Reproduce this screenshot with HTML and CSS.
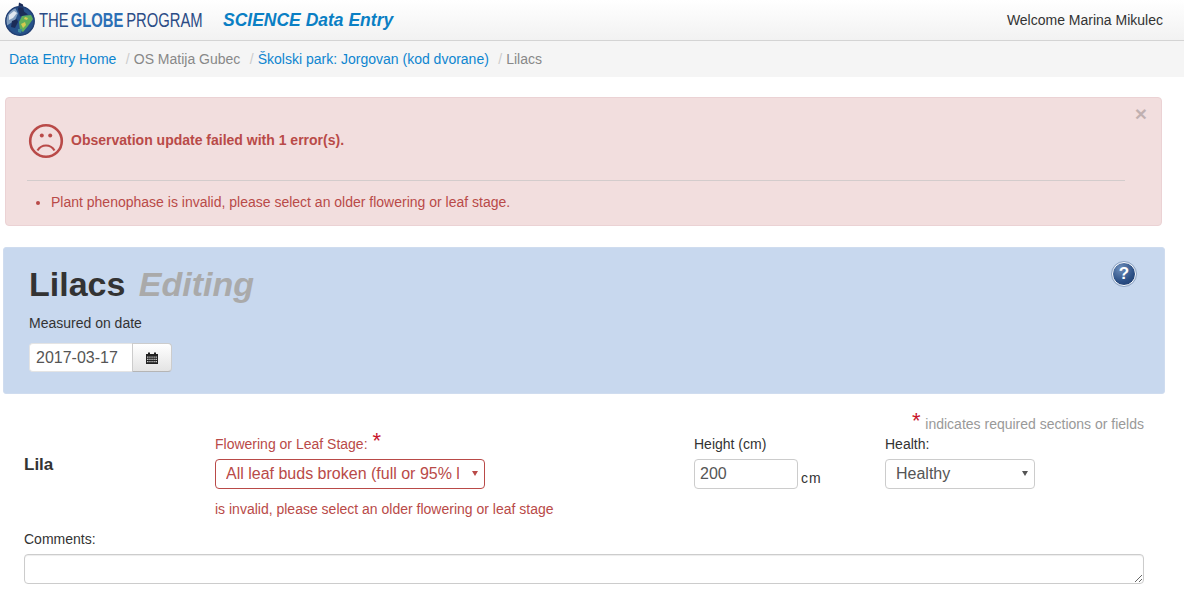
FILE: index.html
```html
<!DOCTYPE html>
<html lang="en">
<head>
<meta charset="utf-8">
<title>Lilacs Editing</title>
<link rel="stylesheet" href="styles.css">
</head>
<body>
<div class="page">
  <header class="topbar">
    <div class="brand">
      <svg class="globe" width="34" height="34" viewBox="0 0 34 34" aria-hidden="true">
        <circle cx="16" cy="19" r="14.500" fill="#26518a"/>
        <path d="M2 19A14.500 14.500 0 0 1 11 5.500l3 6-3 7-5 3-3 2z" fill="#7f9cbd"/>
        <path d="M15 0.500l4 2 1 7 4 3-8 2-2-7z" fill="#1b2c58"/>
        <path d="M5 13l5-4 3 2-4 5-4 2z" fill="#dfe7f0"/>
        <path d="M8 19l5-2 1 3-3 6-4-1z" fill="#1b2c58"/>
        <path d="M18 14l9-1 2 4-5 7-5 6-3-2-1-8z" fill="#5fae5b"/>
        <path d="M17 22l4-2 1 3-3 3zM21 15l3 1-1 2-3-1z" fill="#d5c94f"/>
        <path d="M14 27l4 0-1 4-3-1z" fill="#3e8a9e"/>
        <circle cx="16" cy="19" r="14.200" fill="none" stroke="#223f73" stroke-width="1.400"/>
      </svg>
      <span class="logotype">THE<b>GLOBE</b>PROGRAM</span>
      <span class="app-title">SCIENCE Data Entry</span>
    </div>
    <div class="welcome">Welcome Marina Mikulec</div>
  </header>
  <nav class="crumbs">
    <a href="#">Data Entry Home</a>
    <span class="sep">/</span><span class="muted">OS Matija Gubec</span>
    <span class="sep">/</span><a href="#">Školski park: Jorgovan (kod dvorane)</a>
    <span class="sep">/</span><span class="muted">Lilacs</span>
  </nav>

  <section class="alert">
    <button class="close" type="button">×</button>
    <div class="alert-head">
      <svg width="38" height="38" viewBox="0 0 38 38" aria-hidden="true">
        <circle cx="19" cy="19" r="15.800" fill="none" stroke="#b94a48" stroke-width="2.600"/>
        <circle cx="14.800" cy="13.500" r="2" fill="#b94a48"/>
        <circle cx="23.200" cy="13.500" r="2" fill="#b94a48"/>
        <path d="M10.500 28.500c2-3.300 5-5 8.500-5s6.500 1.700 8.500 5" fill="none" stroke="#b94a48" stroke-width="2.200"/>
      </svg>
      <strong>Observation update failed with 1 error(s).</strong>
    </div>
    <hr class="alert-rule">
    <ul class="alert-list">
      <li>Plant phenophase is invalid, please select an older flowering or leaf stage.</li>
    </ul>
  </section>

  <section class="panel">
    <div>
      <h1>Lilacs <em>Editing</em></h1>
      <label class="date-label">Measured on date</label>
      <div class="date-group">
        <input class="date-input" type="text" value="2017-03-17">
        <button class="date-btn" type="button" aria-label="Open calendar">
          <svg width="12" height="12" viewBox="0 0 12 12" aria-hidden="true">
            <path d="M0 2h2V0.500h2V2h4V0.500h2V2h2v10H0z" fill="#222"/>
            <path d="M1 4.500h1.500v1.300H1zM3.300 4.500h1.300v1.300H3.300zM5.400 4.500h1.300v1.300H5.400zM7.500 4.500h1.300v1.300H7.500zM9.500 4.500H11v1.300H9.500zM1 6.700h1.500V8H1zM3.300 6.700h1.300V8H3.300zM5.400 6.700h1.300V8H5.400zM7.500 6.700h1.300V8H7.500zM9.500 6.700H11V8H9.500zM1 8.900h1.500v1.300H1zM3.300 8.900h1.300v1.300H3.300zM5.400 8.900h1.300v1.300H5.400zM7.500 8.900h1.300v1.300H7.500zM9.500 8.900H11v1.300H9.500z" fill="#c9c9c9"/>
          </svg>
        </button>
      </div>
    </div>
    <button class="help" type="button" aria-label="Help">?</button>
  </section>

  <form class="form">
    <p class="legend"><span class="star">*</span> indicates required sections or fields</p>
    <div class="row">
      <div class="plant">Lila</div>
      <div class="stage has-error">
        <label>Flowering or Leaf Stage: <span class="star">*</span></label>
        <div class="select-wrap stage-select">
          <select><option>All leaf buds broken (full or 95% leaf stage)</option></select>
        </div>
        <div class="error-text">is invalid, please select an older flowering or leaf stage</div>
      </div>
      <div class="height">
        <label>Height (cm)</label>
        <div class="height-line">
          <input type="text" value="200"><span class="unit">cm</span>
        </div>
      </div>
      <div class="health">
        <label>Health:</label>
        <div class="select-wrap health-select">
          <select><option>Healthy</option></select>
        </div>
      </div>
    </div>
    <label class="comments-label">Comments:</label>
    <textarea class="comments"></textarea>
  </form>
</div>
</body>
</html>
```
FILE: styles.css
```css
* { box-sizing: border-box; }
html, body { margin: 0; padding: 0; background: #fff; overflow: hidden; }
body {
  font-family: "Liberation Sans", Arial, sans-serif;
  font-size: 14px;
  line-height: 20px;
  color: #333;
  height: 609px;
}
.page { width: 1184px; }

.topbar {
  height: 41px;
  display: flex;
  justify-content: space-between;
  align-items: center;
  padding: 0 21px 0 4px;
  background: linear-gradient(to bottom, #fff, #f2f2f2);
  border-bottom: 1px solid #d4d4d4;
}
.brand { display: flex; align-items: center; }
.globe { margin-top: -3px; flex: none; }
.logotype {
  font-size: 21px;
  color: #2b4c86;
  margin-left: 1px;
  width: 163px;
  white-space: nowrap;
  transform: scaleX(.705);
  transform-origin: left center;
}
.logotype b { color: #2b6fb5; margin: 0 4px 0 3px; }
.app-title {
  margin-left: 21px;
  font-size: 17.500px;
  font-weight: bold;
  font-style: italic;
  color: #0a7fc4;
}
.welcome { font-size: 14px; color: #333; }

.crumbs {
  height: 36px;
  padding: 8px 9px;
  background: #f5f5f5;
  white-space: nowrap;
}
.crumbs a { color: #0e85d0; text-decoration: none; }
.crumbs .muted { color: #888; }
.crumbs .sep { color: #ccc; margin-left: 5.600px; margin-right: 4px; }

.alert {
  position: relative;
  margin: 20px 0 0 5px;
  width: 1157px;
  height: 129px;
  padding: 0 36px 0 21px;
  background: #f2dede;
  border: 1px solid #ebd2d4;
  border-radius: 4px;
  color: #b94a48;
}
.alert-head {
  display: flex;
  align-items: center;
  height: 82px;
  padding-top: 2px;
  gap: 6px;
}
.alert-head svg { flex: none; margin-top: 1px; }
.alert-rule { margin: 0; border: 0; border-top: 1px solid #d3cccc; }
.alert-list { margin: 11px 0 0; padding-left: 24px; }
.close {
  position: absolute;
  top: 5px;
  right: 14px;
  padding: 0;
  border: 0;
  background: none;
  font: bold 21px/21px "Liberation Sans", sans-serif;
  color: #000;
  opacity: .2;
}

.panel {
  margin: 21px 0 0 3px;
  width: 1162px;
  height: 147px;
  padding: 15px 28px 0 25px;
  display: flex;
  justify-content: space-between;
  align-items: flex-start;
  background: #c8d8ee;
  border: 1px solid #cfdcef;
  border-radius: 3px;
}
h1 {
  margin: 0;
  font-size: 34px;
  line-height: 42px;
  font-weight: bold;
  color: #333;
}
h1 em { color: #aaa; margin-left: 4px; }
.date-label { display: block; margin-top: 8px; color: #333; }
.date-group { display: flex; margin-top: 10px; }
.date-input {
  width: 103px;
  height: 29px;
  padding: 0 6px;
  border: 1px solid #e4e4e4;
  border-right: 0;
  border-radius: 4px 0 0 4px;
  background: #fff;
  font: 16px "Liberation Sans", sans-serif;
  color: #555;
}
.date-btn {
  width: 40px;
  height: 29px;
  padding: 0;
  display: flex;
  align-items: center;
  justify-content: center;
  border: 1px solid #ccc;
  border-bottom-color: #b5b5b5;
  border-radius: 0 4px 4px 0;
  background: linear-gradient(to bottom, #fff, #e4e4e4);
}
.help {
  width: 24px;
  height: 24px;
  padding: 0;
  margin-top: -1px;
  border: 1px solid #fff;
  border-radius: 50%;
  outline: 1px solid #8fa5c4;
  outline-offset: 0;
  background: radial-gradient(circle at 35% 25%, #6f8fbb, #2b4f85 60%, #1d3a6a);
  color: #fff;
  font: bold 17px/20px "Liberation Sans", sans-serif;
}

.form { padding: 0 0 0 24px; width: 1144px; margin-top: 19px; }
.legend {
  margin: 0;
  height: 22px;
  line-height: 22px;
  text-align: right;
  color: #999;
  white-space: nowrap;
}
.star { color: #c9152c; font-size: 22px; line-height: 14px; vertical-align: 1px; margin-right: 1px; }
.row { display: flex; align-items: flex-start; height: 95px; margin-top: -1px; }
.row label { display: block; line-height: 20px; height: 25px; white-space: nowrap; }
.plant { width: 191px; margin-top: 21px; font-size: 17px; line-height: 20px; font-weight: bold; }
.stage { width: 479px; }
.height { width: 191px; }
.health { width: 150px; }
.has-error label { color: #b94a48; }
.has-error .star { color: #c9152c; margin-left: 1px; }
.error-text { margin-top: 10px; color: #b94a48; white-space: nowrap; }

.select-wrap { position: relative; height: 30px; }
.select-wrap::after {
  content: "";
  position: absolute;
  right: 7px;
  top: 12px;
  border-style: solid;
  border-width: 5px 3px 0;
  border-color: #555 transparent transparent;
  pointer-events: none;
}
.select-wrap select {
  width: 100%;
  height: 30px;
  padding: 0 25px 2px 10px;
  -webkit-appearance: none;
  appearance: none;
  border: 1px solid #ccc;
  border-radius: 4px;
  background: #fff;
  font: 16px "Liberation Sans", sans-serif;
  color: #555;
}
.stage-select { width: 270px; }
.stage-select::after { border-top-color: #b94a48; }
.stage-select select { border-color: #b94a48; color: #b94a48; }
.health-select { width: 150px; }

.height-line { display: flex; align-items: flex-start; }
.height-line input {
  width: 104px;
  height: 30px;
  padding: 0 5px;
  border: 1px solid #ccc;
  border-radius: 4px;
  font: 16px "Liberation Sans", sans-serif;
  color: #555;
}
.unit { margin: 9px 0 0 3px; letter-spacing: 1px; }

.comments-label { display: block; line-height: 20px; }
.comments {
  display: block;
  width: 100%;
  height: 30px;
  margin-top: 5px;
  border: 1px solid #ccc;
  border-radius: 4px;
  box-shadow: inset 0 1px 1px rgba(0,0,0,.075);
  resize: both;
  font: 14px "Liberation Sans", sans-serif;
}
```
